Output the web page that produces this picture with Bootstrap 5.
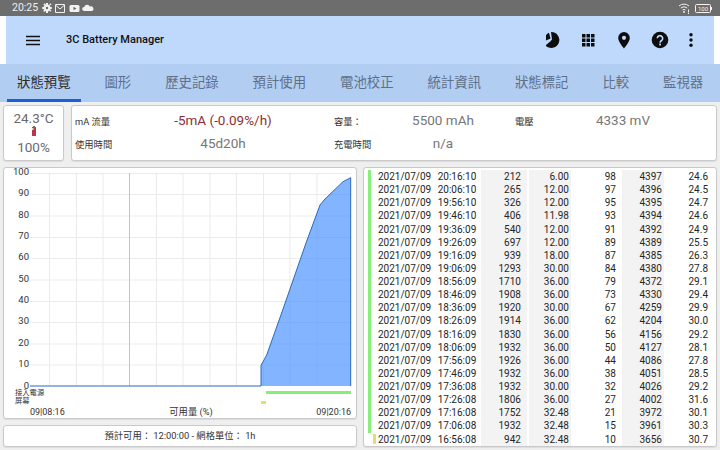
<!doctype html>
<html lang="zh-Hant">
<head>
<meta charset="utf-8">
<title>3C Battery Manager</title>
<link href="https://cdn.jsdelivr.net/npm/bootstrap@5.3.0/dist/css/bootstrap.min.css" rel="stylesheet">
<style>
html,body{width:720px;height:450px;overflow:hidden;background:#fff;}
body{font-family:Roboto,"Noto Sans CJK TC",sans-serif;color:#222;}
.sysbar{height:16px;background:#6d6d6d;color:#f0f0f0;font-size:10.5px;padding:0 7px 0 12px;line-height:16px;}
.sysbar svg{display:block;}
.appbar{height:48px;margin:0 6px;background:#bfd9fd;padding:0 20px;}
.app-title{font-size:11px;font-weight:500;color:#111;margin-left:26px;}
.app-actions{margin-right:-12px;}
.app-actions svg{display:block;}
.tabstrip{height:38px;background:#b2cdf2;padding:0 7px;gap:13.900px;flex-wrap:nowrap;}
.tabstrip .nav-link{padding:0 10px;height:38px;line-height:37px;font-size:13.400px;color:#5d7089;border-bottom:3px solid transparent;white-space:nowrap;}
.tabstrip .nav-link.active{color:#2b2b2b;border-bottom-color:#1a5fd6;background:transparent;}
.workspace{height:348px;background:#efefef;padding:3px;gap:6px;}
.panel{background:#fff;border:1px solid #c9c9c9;border-radius:3px;box-shadow:0 1px 1px rgba(0,0,0,.08);}
.toprow{height:56px;gap:7px;}
.tempbox{width:61px;color:#6a6a6a;font-size:13.500px;line-height:15px;}
.tempbox svg{display:block;margin:0 auto;}
.infobox{width:646px;padding:0 0 0 3px;}
.infogrid{display:grid;grid-template-columns:37px 216px 37px 138px 37px 136px;column-gap:3px;grid-auto-rows:23px;align-content:center;height:100%;}
.lbl{font-size:9.300px;color:#333;white-space:nowrap;line-height:23px;}
.val{font-size:13.500px;color:#777;text-align:center;line-height:21px;white-space:nowrap;}
.val-alert{color:#8c2f33;}
.mainrow{height:280px;gap:6px;}
.leftcol{width:354px;gap:6px;}
.chartbox{height:252px;}
.chartbox svg{display:block;overflow:visible;}
.chartbox text{font-family:Roboto,"Noto Sans CJK TC",sans-serif;fill:#333;}
.foot{height:22px;font-size:9.300px;color:#333;line-height:20px;text-align:center;}
.logbox{width:354px;padding:2px 0 0;}
.logtable{table-layout:fixed;width:352px;font-size:10px;color:#222;margin:0;}
.logtable td{padding:0;height:13.120px;line-height:13.120px;white-space:nowrap;background:transparent;box-shadow:none;color:#262626;}
.logtable td.num{text-align:right;}
.logtable td.c1{padding-right:6px;border-right:2px solid #fff;}
.logtable td.c2{padding-right:2px;}
.logtable td.c3{padding-right:6px;}
.logtable td.c4{padding-right:2px;}
.logtable td.c5{padding-right:8px;}
.logtable td.shade{background:#f3f3f3;}
.logtable td.bar-g{background:linear-gradient(#86ef7a,#86ef7a) 4px 0/3px 100% no-repeat;}
.logtable td.bar-y{background:linear-gradient(#e3df6c,#e3df6c) 9px 1px/3px 10px no-repeat;}
</style>
</head>
<body>
<div class="sysbar d-flex align-items-center">
  <span>20:25</span>
  <svg class="ms-1" width="62" height="16" viewBox="0 0 62 16">
    <g fill="#f2f2f2">
      <circle cx="5" cy="8" r="3.400"/>
      <path d="M4 3h2v2H4zM4 11h2v2H4zM.2 7h2v2h-2zM7.800 7h2v2h-2zM1.400 4.200l1.400-1 1 1.400-1.400 1zM7.200 4.200l1.400-1 .8 1.200-1.400 1zM1.200 11l1.200-1.400 1.200 1-1.200 1.400zM7 10.600l1.200-1 1.200 1.200-1.200 1z"/>
      <circle cx="5" cy="8" r="1.200" fill="#6d6d6d"/>
    </g>
    <path d="M13.500 4.500h9v8h-9zM14 5.500l4 3.500 4-3.500" fill="none" stroke="#f2f2f2" stroke-width="1"/>
    <rect x="27.500" y="5" width="10" height="7" rx="1.500" fill="#f2f2f2"/><path d="M31.500 6.800l3 1.700-3 1.700z" fill="#6d6d6d"/>
    <path d="M42 11a2 2 0 0 1 .3-4 3 3 0 0 1 5.600-.4A2.300 2.300 0 0 1 50 11z" fill="#f2f2f2"/>
  </svg>
  <span class="flex-grow-1"></span>
  <svg width="35" height="16" viewBox="0 0 35 16">
    <path d="M1 6a7.500 7.500 0 0 1 10 0M2.800 8a5 5 0 0 1 6.400 0M4.600 10a2.400 2.400 0 0 1 2.800 0" fill="none" stroke="#f2f2f2" stroke-width="1"/>
    <circle cx="6" cy="12" r=".9" fill="#f2f2f2"/><path d="M10 9.500h1v3h-1zM10 13h1v1h-1z" fill="#f2f2f2"/>
    <rect x="17.500" y="4.500" width="15" height="8" rx="1" fill="none" stroke="#f2f2f2"/><rect x="33" y="7" width="1" height="3" fill="#f2f2f2"/>
    <text x="25" y="11" text-anchor="middle" font-size="6" fill="#f2f2f2" font-family="Roboto,sans-serif">100</text>
  </svg>
</div>

<nav class="appbar d-flex align-items-center">
  <svg width="14" height="11" viewBox="0 0 14 11"><path d="M0 .8h14v1.500H0zM0 4.800h14v1.500H0zM0 8.800h14v1.500H0z" fill="#111"/></svg>
  <span class="app-title flex-grow-1">3C Battery Manager</span>
  <div class="app-actions d-flex align-items-center">
    <svg width="160" height="24" viewBox="0 0 160 24">
      <path d="M-1.500 10.500A7.800 7.800 0 0 1 3 4.800L4.500 10.500L-1 12.800zM5 4a8 8 0 1 1-5.500 13.500L4.500 13.200L6 11.500z" fill="#0d0d0d"/>
      <path d="M36 6h3.500v3.500H36zM40.500 6H44v3.500h-3.500zM45 6h3.500v3.500H45zM36 10.500h3.500V14H36zM40.500 10.500H44V14h-3.500zM45 10.500h3.500V14H45zM36 15h3.500v3.500H36zM40.500 15H44v3.500h-3.500zM45 15h3.500v3.500H45z" fill="#0d0d0d"/>
      <path d="M78 4a5.800 5.800 0 0 0-5.800 5.800C72.200 14 78 20.500 78 20.500s5.800-6.500 5.800-10.700A5.800 5.800 0 0 0 78 4z" fill="#0d0d0d"/><circle cx="78" cy="9.800" r="2.100" fill="#bfd9fd"/>
      <circle cx="114" cy="12" r="8.300" fill="#0d0d0d"/>
      <path d="M111.300 10.300a2.700 2.700 0 1 1 4.300 2.200c-1 .7-1.500 1.200-1.500 2.200" fill="none" stroke="#bfd9fd" stroke-width="1.600"/><rect x="113.200" y="15.600" width="1.800" height="1.800" fill="#bfd9fd"/>
      <circle cx="145" cy="6.800" r="1.700" fill="#0d0d0d"/><circle cx="145" cy="12" r="1.700" fill="#0d0d0d"/><circle cx="145" cy="17.200" r="1.700" fill="#0d0d0d"/>
    </svg>
  </div>
</nav>

<ul class="nav tabstrip">
  <li class="nav-item"><a class="nav-link active" href="#">狀態預覽</a></li>
  <li class="nav-item"><a class="nav-link" href="#">圖形</a></li>
  <li class="nav-item"><a class="nav-link" href="#">歷史記錄</a></li>
  <li class="nav-item"><a class="nav-link" href="#">預計使用</a></li>
  <li class="nav-item"><a class="nav-link" href="#">電池校正</a></li>
  <li class="nav-item"><a class="nav-link" href="#">統計資訊</a></li>
  <li class="nav-item"><a class="nav-link" href="#">狀態標記</a></li>
  <li class="nav-item"><a class="nav-link" href="#">比較</a></li>
  <li class="nav-item"><a class="nav-link" href="#">監視器</a></li>
</ul>

<main class="workspace d-flex flex-column">
  <section class="toprow d-flex">
    <div class="tempbox panel d-flex flex-column align-items-center justify-content-center">
      <span>24.3°C</span>
      <svg width="6" height="10" viewBox="0 0 6 10"><rect x="1" y="1" width="4" height="9" fill="#b23a44"/><rect x="2" y="0" width="2" height="1.500" fill="#777"/><rect x="1" y="2" width="1.500" height="2" fill="#ddd"/></svg>
      <span class="mt-1">100%</span>
    </div>
    <div class="infobox panel">
      <div class="infogrid">
        <span class="lbl">mA 流量</span><span class="val val-alert">-5mA (-0.09%/h)</span>
        <span class="lbl">容量：</span><span class="val">5500 mAh</span>
        <span class="lbl">電壓</span><span class="val">4333 mV</span>
        <span class="lbl">使用時間</span><span class="val">45d20h</span>
        <span class="lbl">充電時間</span><span class="val">n/a</span>
      </div>
    </div>
  </section>

  <section class="mainrow d-flex">
    <div class="leftcol d-flex flex-column">
      <div class="chartbox panel">
        <svg width="352" height="250" viewBox="4 168 352 250">
          <g stroke="#ebebeb" stroke-width="1">
            <path d="M30 173.500H351M30 194.500H351M30 216H351M30 237.500H351M30 258.500H351M30 280H351M30 301.500H351M30 322.500H351M30 344H351M30 365H351"/>
            <path d="M49.500 173V386M76.500 173V386M103 173V386M156.500 173V386M183 173V386M210 173V386M236.500 173V386M263.500 173V386M290 173V386M317 173V386"/>
          </g>
          <path d="M129.500 173V386" stroke="#c4c4c4" stroke-width="1"/>
          <path d="M261 386V365.400L266.700 355L282.700 310L306 243L320 205L325 199L343 181.700L350.700 177.700V386Z" fill="#3f8cff" fill-opacity=".65"/>
          <path d="M30 386H261V365.400L266.700 355L282.700 310L306 243L320 205L325 199L343 181.700L350.700 177.700V386" fill="none" stroke="#2a6bb8" stroke-width="1"/>
          <g font-size="9.500" text-anchor="end">
            <text x="29" y="175">100</text><text x="29" y="196">90</text><text x="29" y="217.500">80</text><text x="29" y="239">70</text><text x="29" y="260">60</text><text x="29" y="281.500">50</text><text x="29" y="303">40</text><text x="29" y="324">30</text><text x="29" y="345.500">20</text><text x="29" y="367">10</text><text x="29" y="388.500">0</text>
          </g>
          <text x="15" y="394.500" font-size="7.300">接入電源</text>
          <text x="15" y="403" font-size="7.300">屏幕</text>
          <rect x="266" y="391" width="85" height="3" fill="#86ef7a"/>
          <rect x="261" y="401" width="5" height="3" fill="#e3df6c"/>
          <text x="30" y="415" font-size="9">09|08:16</text>
          <text x="191" y="415" font-size="9.300" text-anchor="middle">可用量 (%)</text>
          <text x="351" y="415" font-size="9" text-anchor="end">09|20:16</text>
        </svg>
      </div>
      <div class="foot panel">預計可用： 12:00:00 - 網格單位： 1h</div>
    </div>

    <div class="logbox panel">
      <table class="table table-borderless logtable">
        <colgroup><col style="width:14px"><col style="width:59.700px"><col style="width:43.300px"><col style="width:47px"><col style="width:43px"><col style="width:51px"><col style="width:42px"><col style="width:52px"></colgroup>
        <tbody>
<tr><td class="bar-g"></td><td>2021/07/09</td><td>20:16:10</td><td class="num c1 shade">212</td><td class="num c2 shade">6.00</td><td class="num c3">98</td><td class="num c4 shade">4397</td><td class="num c5">24.6</td></tr>
<tr><td class="bar-g"></td><td>2021/07/09</td><td>20:06:10</td><td class="num c1 shade">265</td><td class="num c2 shade">12.00</td><td class="num c3">97</td><td class="num c4 shade">4396</td><td class="num c5">24.5</td></tr>
<tr><td class="bar-g"></td><td>2021/07/09</td><td>19:56:10</td><td class="num c1 shade">326</td><td class="num c2 shade">12.00</td><td class="num c3">95</td><td class="num c4 shade">4395</td><td class="num c5">24.7</td></tr>
<tr><td class="bar-g"></td><td>2021/07/09</td><td>19:46:10</td><td class="num c1 shade">406</td><td class="num c2 shade">11.98</td><td class="num c3">93</td><td class="num c4 shade">4394</td><td class="num c5">24.6</td></tr>
<tr><td class="bar-g"></td><td>2021/07/09</td><td>19:36:09</td><td class="num c1 shade">540</td><td class="num c2 shade">12.00</td><td class="num c3">91</td><td class="num c4 shade">4392</td><td class="num c5">24.9</td></tr>
<tr><td class="bar-g"></td><td>2021/07/09</td><td>19:26:09</td><td class="num c1 shade">697</td><td class="num c2 shade">12.00</td><td class="num c3">89</td><td class="num c4 shade">4389</td><td class="num c5">25.5</td></tr>
<tr><td class="bar-g"></td><td>2021/07/09</td><td>19:16:09</td><td class="num c1 shade">939</td><td class="num c2 shade">18.00</td><td class="num c3">87</td><td class="num c4 shade">4385</td><td class="num c5">26.3</td></tr>
<tr><td class="bar-g"></td><td>2021/07/09</td><td>19:06:09</td><td class="num c1 shade">1293</td><td class="num c2 shade">30.00</td><td class="num c3">84</td><td class="num c4 shade">4380</td><td class="num c5">27.8</td></tr>
<tr><td class="bar-g"></td><td>2021/07/09</td><td>18:56:09</td><td class="num c1 shade">1710</td><td class="num c2 shade">36.00</td><td class="num c3">79</td><td class="num c4 shade">4372</td><td class="num c5">29.1</td></tr>
<tr><td class="bar-g"></td><td>2021/07/09</td><td>18:46:09</td><td class="num c1 shade">1908</td><td class="num c2 shade">36.00</td><td class="num c3">73</td><td class="num c4 shade">4330</td><td class="num c5">29.4</td></tr>
<tr><td class="bar-g"></td><td>2021/07/09</td><td>18:36:09</td><td class="num c1 shade">1920</td><td class="num c2 shade">30.00</td><td class="num c3">67</td><td class="num c4 shade">4259</td><td class="num c5">29.9</td></tr>
<tr><td class="bar-g"></td><td>2021/07/09</td><td>18:26:09</td><td class="num c1 shade">1914</td><td class="num c2 shade">36.00</td><td class="num c3">62</td><td class="num c4 shade">4204</td><td class="num c5">30.0</td></tr>
<tr><td class="bar-g"></td><td>2021/07/09</td><td>18:16:09</td><td class="num c1 shade">1830</td><td class="num c2 shade">36.00</td><td class="num c3">56</td><td class="num c4 shade">4156</td><td class="num c5">29.2</td></tr>
<tr><td class="bar-g"></td><td>2021/07/09</td><td>18:06:09</td><td class="num c1 shade">1932</td><td class="num c2 shade">36.00</td><td class="num c3">50</td><td class="num c4 shade">4127</td><td class="num c5">28.1</td></tr>
<tr><td class="bar-g"></td><td>2021/07/09</td><td>17:56:09</td><td class="num c1 shade">1926</td><td class="num c2 shade">36.00</td><td class="num c3">44</td><td class="num c4 shade">4086</td><td class="num c5">27.8</td></tr>
<tr><td class="bar-g"></td><td>2021/07/09</td><td>17:46:09</td><td class="num c1 shade">1932</td><td class="num c2 shade">36.00</td><td class="num c3">38</td><td class="num c4 shade">4051</td><td class="num c5">28.5</td></tr>
<tr><td class="bar-g"></td><td>2021/07/09</td><td>17:36:08</td><td class="num c1 shade">1932</td><td class="num c2 shade">30.00</td><td class="num c3">32</td><td class="num c4 shade">4026</td><td class="num c5">29.2</td></tr>
<tr><td class="bar-g"></td><td>2021/07/09</td><td>17:26:08</td><td class="num c1 shade">1806</td><td class="num c2 shade">36.00</td><td class="num c3">27</td><td class="num c4 shade">4002</td><td class="num c5">31.6</td></tr>
<tr><td class="bar-g"></td><td>2021/07/09</td><td>17:16:08</td><td class="num c1 shade">1752</td><td class="num c2 shade">32.48</td><td class="num c3">21</td><td class="num c4 shade">3972</td><td class="num c5">30.1</td></tr>
<tr><td class="bar-g"></td><td>2021/07/09</td><td>17:06:08</td><td class="num c1 shade">1932</td><td class="num c2 shade">32.48</td><td class="num c3">15</td><td class="num c4 shade">3961</td><td class="num c5">30.3</td></tr>
<tr><td class="bar-y"></td><td>2021/07/09</td><td>16:56:08</td><td class="num c1 shade">942</td><td class="num c2 shade">32.48</td><td class="num c3">10</td><td class="num c4 shade">3656</td><td class="num c5">30.7</td></tr>
        </tbody>
      </table>
    </div>
  </section>
</main>
<script src="https://cdn.jsdelivr.net/npm/bootstrap@5.3.0/dist/js/bootstrap.bundle.min.js"></script>
</body>
</html>
